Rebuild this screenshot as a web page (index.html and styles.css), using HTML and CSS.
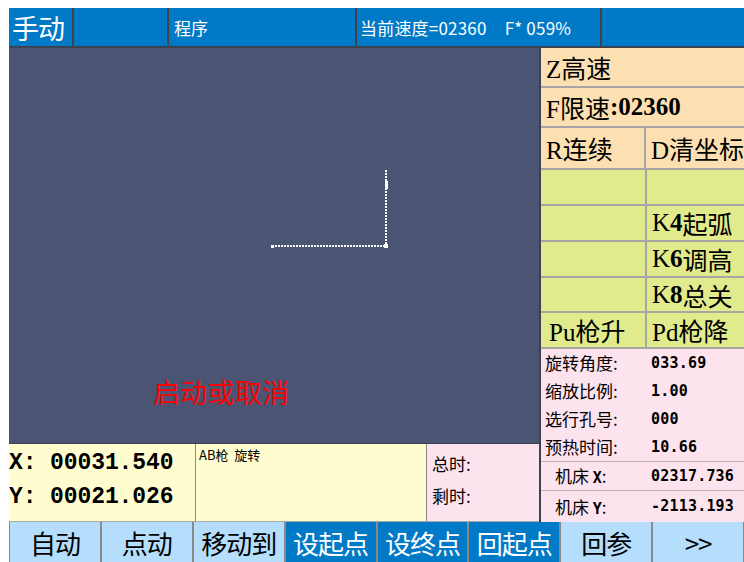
FILE: index.html
```html
<!DOCTYPE html>
<html lang="zh-CN">
<head>
    <meta charset="UTF-8">
    <meta name="viewport" content="width=device-width, initial-scale=1.0">
    <title>手动</title>
    <link rel="stylesheet" href="styles.css">
</head>
<body>
    <div class="screen">
        <div class="topbar">
            <div class="tb-cell tb-mode">手动</div>
            <div class="tb-cell tb-blank"></div>
            <div class="tb-cell tb-prog">程序</div>
            <div class="tb-cell tb-speed">当前速度=02360<span class="tb-gap"></span>F* 059%</div>
            <div class="tb-cell tb-end"></div>
        </div>
        <div class="main">
            <div class="left">
                <div class="canvas">
                    <svg class="path" width="530" height="395" viewBox="0 0 530 395">
                        <line x1="263" y1="198" x2="376" y2="198" stroke="#fff" stroke-width="2" stroke-dasharray="2 1"/>
                        <line x1="377" y1="122" x2="377" y2="198" stroke="#fff" stroke-width="2" stroke-dasharray="2 1"/>
                        <rect x="375" y="196" width="4" height="4" fill="#fff"/>
                        <rect x="376" y="133" width="3" height="8" fill="#fff"/>
                        <rect x="262" y="197" width="3" height="3" fill="#fff"/>
                    </svg>
                    <div class="hint">启动或取消</div>
                </div>
                <div class="info">
                    <div class="coords">
                        <div>X: 00031.540</div>
                        <div>Y: 00021.026</div>
                    </div>
                    <div class="note">AB枪&nbsp; 旋转</div>
                    <div class="timer">
                        <div>总时:</div>
                        <div>剩时:</div>
                    </div>
                </div>
            </div>
            <div class="panel">
                <div class="row peach r-z">Z高速</div>
                <div class="row peach r-f">F限速<b>:02360</b></div>
                <div class="row peach split r-rd">
                    <div class="cell">R连续</div>
                    <div class="cell">D清坐标</div>
                </div>
                <div class="row green split r-g1">
                    <div class="cell"></div>
                    <div class="cell"></div>
                </div>
                <div class="row green split r-g">
                    <div class="cell"></div>
                    <div class="cell">K<b>4</b>起弧</div>
                </div>
                <div class="row green split r-g">
                    <div class="cell"></div>
                    <div class="cell">K<b>6</b>调高</div>
                </div>
                <div class="row green split r-g">
                    <div class="cell"></div>
                    <div class="cell">K<b>8</b>总关</div>
                </div>
                <div class="row green split r-g">
                    <div class="cell center">Pu枪升</div>
                    <div class="cell">Pd枪降</div>
                </div>
                <div class="stats">
                    <div class="stat"><span class="label">旋转角度:</span><span class="val">033.69</span></div>
                    <div class="stat"><span class="label">缩放比例:</span><span class="val">1.00</span></div>
                    <div class="stat"><span class="label">选行孔号:</span><span class="val">000</span></div>
                    <div class="stat"><span class="label">预热时间:</span><span class="val">10.66</span></div>
                    <div class="stat lined"><span class="label indent">机床 <b>X</b>:</span><span class="val">02317.736</span></div>
                    <div class="stat lined last"><span class="label indent">机床 <b>Y</b>:</span><span class="val">-2113.193</span></div>
                </div>
            </div>
        </div>
        <div class="buttons">
            <div class="btn">自动</div>
            <div class="btn">点动</div>
            <div class="btn">移动到</div>
            <div class="btn on">设起点</div>
            <div class="btn on">设终点</div>
            <div class="btn on">回起点</div>
            <div class="btn">回参</div>
            <div class="btn">&gt;&gt;</div>
        </div>
    </div>
</body>
</html>
```

FILE: styles.css
```css
body {
    margin: 8px 0 0 9px;
    background: #fff;
    font-family: "Noto Sans CJK SC", sans-serif;
    overflow: hidden;
}
.screen {
    width: 735px;
    height: 554px;
    display: flex;
    flex-direction: column;
}

/* top status bar */
.topbar {
    display: flex;
    height: 38px;
    background: #0079c6;
    border-bottom: 2px solid #3c4250;
    color: #fff;
}
.tb-cell {
    display: flex;
    align-items: center;
    border-right: 2px solid #3c4250;
    box-sizing: border-box;
    height: 38px;
    white-space: nowrap;
}
.tb-mode {
    width: 65px;
    font-size: 27px;
    padding-left: 3px;
    letter-spacing: -1px;
}
.tb-blank { width: 95px; }
.tb-prog {
    width: 188px;
    font-size: 17px;
    padding-left: 5px;
}
.tb-speed {
    width: 245px;
    font-size: 17px;
    padding-left: 3px;
    letter-spacing: 0.2px;
}
.tb-gap { display: inline-block; width: 18px; }
.tb-end { width: 142px; border-right: none; }

/* middle */
.main {
    display: flex;
    height: 474px;
}
.left {
    width: 530px;
    display: flex;
    flex-direction: column;
}
.canvas {
    position: relative;
    height: 395px;
    background: #4b5573;
}
.path {
    display: block;
}
.hint {
    position: absolute;
    left: 144px;
    top: 326px;
    color: #f00;
    font-size: 27px;
    line-height: 36px;
    letter-spacing: 0.3px;
}

.info {
    display: flex;
    height: 79px;
    box-sizing: border-box;
    border-top: 1px solid #3c4250;
    border-bottom: 1px solid #a8a8a8;
}
.coords {
    width: 186px;
    background: #fffdd0;
    border-right: 1px solid #8a8a8a;
    padding-top: 2px;
    font-family: "Liberation Mono", monospace;
    font-weight: bold;
    font-size: 23px;
    line-height: 34px;
    letter-spacing: -0.1px;
    white-space: nowrap;
}
.note {
    width: 231px;
    background: #fffdd0;
    border-right: 1px solid #8a8a8a;
    font-size: 13px;
    padding: 2px 0 0 3px;
    line-height: 18px;
    box-sizing: border-box;
}
.timer {
    flex: 1;
    background: #fde3ee;
    font-size: 17px;
    line-height: 32px;
    padding: 4px 0 0 5px;
}

/* right panel */
.panel {
    width: 205px;
    box-sizing: border-box;
    border-left: 2px solid #3c4250;
    display: flex;
    flex-direction: column;
    font-family: "Liberation Serif", "Noto Sans CJK SC", serif;
    font-size: 25px;
    color: #000;
}
.row {
    display: flex;
    align-items: center;
    box-sizing: border-box;
    border-bottom: 2px solid #a6a6a6;
    padding-left: 5px;
    white-space: nowrap;
    overflow: hidden;
}
.row b { font-weight: bold; }
.peach { background: #fde0b2; }
.green { background: #e1eb8c; }
.r-z { height: 40px; }
.r-f { height: 41px; }
.r-rd { height: 42px; }
.r-g1 { height: 37px; }
.r-g { height: 36px; }
.split { padding-left: 0; }
.cell {
    height: 100%;
    display: flex;
    align-items: center;
    padding-left: 5px;
    box-sizing: border-box;
}
.cell:first-child {
    width: 106px;
    border-right: 2px solid #a6a6a6;
}
.cell:last-child {
    flex: 1;
    padding-left: 5px;
}
.cell.center {
    padding-left: 8px;
}

.stats {
    flex: 1;
    background: #fde3ee;
    display: flex;
    flex-direction: column;
}
.stat {
    display: flex;
    align-items: center;
    height: 28px;
    padding-left: 4px;
    font-family: "Noto Sans CJK SC", sans-serif;
    font-size: 17px;
    white-space: nowrap;
}
.stat.lined { border-top: 1px solid #b8b0b4; }
.stat.last { height: 31px; }
.label {
    width: 106px;
}
.label.indent { padding-left: 10px; box-sizing: border-box; }
.label b {
    font-family: "DejaVu Sans Mono", monospace;
    font-size: 15px;
}
.val {
    font-family: "DejaVu Sans Mono", monospace;
    font-weight: bold;
    font-size: 15px;
    letter-spacing: 0.2px;
}

/* soft keys */
.buttons {
    display: flex;
    height: 40px;
}
.btn {
    flex: 1;
    display: flex;
    align-items: center;
    justify-content: center;
    background: #b4defc;
    border-right: 1px solid #8a8a8a;
    border-left: 1px solid #8a8a8a;
    font-size: 26px;
    color: #000;
    white-space: nowrap;
    letter-spacing: -1px;
}
.btn.on {
    background: #0079c6;
    color: #fff;
}
```
